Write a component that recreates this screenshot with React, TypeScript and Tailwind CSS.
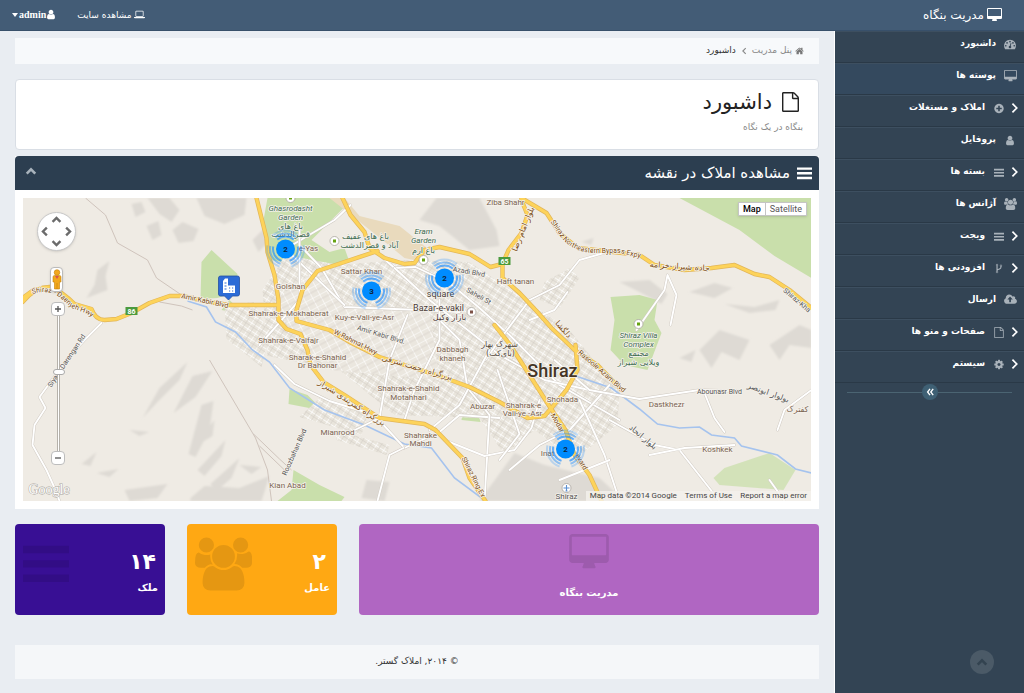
import React from "react";

type IconDef = { box: string; d: string };

const ICONS: Record<string, IconDef> = {
  desktop: {
    box: "64 0 1920 1792",
    d: "M1856 992v-832q0-13-9.5-22.5t-22.5-9.5h-1600q-13 0-22.5 9.5t-9.5 22.5v832q0 13 9.5 22.5t22.5 9.5h1600q13 0 22.5-9.5t9.5-22.5zm128-832v1088q0 66-47 113t-113 47h-544q0 37 16 77.5t32 71 16 43.5q0 26-19 45t-45 19h-512q-26 0-45-19t-19-45q0-14 16-44t32-70 16-78h-544q-66 0-113-47t-47-113v-1088q0-66 47-113t113-47h1600q66 0 113 47t47 113z",
  },
  user: {
    box: "256 0 1280 1792",
    d: "M1536 1399q0 109-62.5 187t-150.5 78h-854q-88 0-150.5-78t-62.5-187q0-85 8.5-160.5t31.5-152 58.5-131 94-89 134.5-34.5q131 128 313 128t313-128q76 0 134.5 34.5t94 89 58.5 131 31.5 152 8.5 160.5zm-256-887q0 159-112.5 271.5t-271.5 112.5-271.5-112.5-112.5-271.5 112.5-271.5 271.5-112.5 271.5 112.5 112.5 271.5z",
  },
  users: {
    box: "64 0 1920 1792",
    d: "M657 896q-162 5-265 128h-134q-82 0-138-40.5t-56-118.5q0-353 124-353 6 0 43.5 21t97.5 42.5 119 21.5q67 0 133-23-5 37-5 66 0 159 93 293zm1071 637q0 120-73 189.5t-194 69.5h-874q-121 0-194-69.5t-73-189.5q0-53 3.5-103.5t14-109 26.5-108.5 43-97.5 62-81 85.5-53.5 111.5-20q10 0 43 21.5t73 48 107 48 135 21.5 135-21.5 107-48 73-48 43-21.5q61 0 111.5 20t85.5 53.5 62 81 43 97.5 26.5 108.5 14 109 3.5 103.5zm-1024-1277q0 106-75 181t-181 75-181-75-75-181 75-181 181-75 181 75 75 181zm704 384q0 159-112.5 271.5t-271.5 112.5-271.5-112.5-112.5-271.5 112.5-271.5 271.5-112.5 271.5 112.5 112.5 271.5zm576 225q0 78-56 118.5t-138 40.5h-134q-103-123-265-128 93-134 93-293 0-29-5-66 66 23 133 23 59 0 119-21.5t97.5-42.5 43.5-21q124 0 124 353zm-128-609q0 106-75 181t-181 75-181-75-75-181 75-181 181-75 181 75 75 181z",
  },
  home: {
    box: "64 128 1664 1536",
    d: "M1472 992v480q0 26-19 45t-45 19h-384v-384h-256v384h-384q-26 0-45-19t-19-45v-480q0-1 .5-3t.5-3l575-474 575 474q1 2 1 6zm223-69l-62 74q-8 9-21 11h-3q-13 0-21-7l-692-577-692 577q-12 8-24 7-13-2-21-11l-62-74q-8-10-7-23.5t11-21.5l719-599q32-26 76-26t76 26l244 204v-195q0-14 9-23t23-9h192q14 0 23 9t9 23v408l219 182q10 8 11 21.5t-7 23.5z",
  },
  plus: {
    box: "128 0 1536 1792",
    d: "M1344 960v-128q0-26-19-45t-45-19h-256v-256q0-26-19-45t-45-19h-128q-26 0-45 19t-19 45v256h-256q-26 0-45 19t-19 45v128q0 26 19 45t45 19h256v256q0 26 19 45t45 19h128q26 0 45-19t19-45v-256h256q26 0 45-19t19-45zm320-64q0 209-103 385.5t-279.5 279.5-385.5 103-385.5-103-279.5-279.5-103-385.5 103-385.5 279.5-279.5 385.5-103 385.5 103 279.5 279.5 103 385.5z",
  },
  cog: {
    box: "128 0 1536 1792",
    d: "M1152 896q0-106-75-181t-181-75-181 75-75 181 75 181 181 75 181-75 75-181zm512-109v222q0 12-8 23t-20 13l-185 28q-19 54-39 91 35 50 107 138 10 12 10 25t-9 23q-27 37-99 108t-94 71q-12 0-26-9l-138-108q-44 23-91 38-16 136-29 186-7 28-36 28h-222q-14 0-24.5-8.5t-11.5-21.5l-28-184q-49-16-90-37l-141 107q-10 9-25 9-14 0-25-11-126-114-165-168-7-10-7-23 0-12 8-23 15-21 51-66.5t54-70.5q-27-50-41-99l-183-27q-13-2-21-12.5t-8-23.5v-222q0-12 8-23t19-13l186-28q14-46 39-92-40-57-107-138-10-12-10-24 0-10 9-23 26-36 98.5-107.5t94.5-71.5q13 0 26 10l138 107q44-23 91-38 16-136 29-186 7-28 36-28h222q14 0 24.5 8.5t11.5 21.5l28 184q49 16 90 37l142-107q9-9 24-9 13 0 25 10 129 119 165 170 7 8 7 22 0 12-8 23-15 21-51 66.5t-54 70.5q26 50 41 98l183 28q13 2 21 12.5t8 23.5z",
  },
  cloud: {
    box: "0 64 1920 1792",
    d: "M1280 864q0-14-9-23l-352-352q-9-9-23-9t-23 9l-351 351q-10 12-10 24 0 14 9 23t23 9h224v352q0 13 9.5 22.5t22.5 9.5h192q13 0 22.5-9.5t9.5-22.5v-352h224q13 0 22.5-9.5t9.5-22.5zm640 288q0 159-112.5 271.5t-271.5 112.5h-1088q-185 0-316.5-131.5t-131.5-316.5q0-130 70-240t188-165q-2-30-2-43 0-212 150-362t362-150q156 0 285.5 87t188.5 231q71-62 166-62 106 0 181 75t75 181q0 76-41 138 130 31 213.5 135.5t83.5 238.5z",
  },
  file: {
    box: "128 0 1536 1792",
    d: "M1596 380q28 28 48 76t20 88v1152q0 40-28 68t-68 28h-1344q-40 0-68-28t-28-68v-1600q0-40 28-68t68-28h896q40 0 88 20t76 48zm-444-244v376h376q-10-29-22-41l-313-313q-12-12-41-22zm384 1528v-1024h-416q-40 0-68-28t-28-68v-416h-768v1536h1280z",
  },
  laptop: {
    box: "64 128 1920 1536",
    d: "M480 1280q-66 0-113-47t-47-113v-704q0-66 47-113t113-47h1088q66 0 113 47t47 113v704q0 66-47 113t-113 47h-1088zm-32-864v704q0 13 9.5 22.5t22.5 9.5h1088q13 0 22.5-9.5t9.5-22.5v-704q0-13-9.5-22.5t-22.5-9.5h-1088q-13 0-22.5 9.5t-9.5 22.5zm1376 928h160v96q0 40-47 68t-113 28h-1600q-66 0-113-28t-47-68v-96h1760zm-720 96q16 0 16-16t-16-16h-160q-16 0-16 16t16 16h160z",
  },
  fork: {
    box: "256 0 1280 1792",
    d: "M672 1472q0-40-28-68t-68-28-68 28-28 68 28 68 68 28 68-28 28-68zm0-1152q0-40-28-68t-68-28-68 28-28 68 28 68 68 28 68-28 28-68zm640 128q0-40-28-68t-68-28-68 28-28 68 28 68 68 28 68-28 28-68zm96 0q0 52-26 96.5t-70 69.5q-2 287-226 414-67 38-203 81-128 40-169.5 71t-41.5 100v26q44 25 70 69.5t26 96.5q0 80-56 136t-136 56-136-56-56-136q0-52 26-96.5t70-69.5v-820q-44-25-70-69.5t-26-96.5q0-80 56-136t136-56 136 56 56 136q0 52-26 96.5t-70 69.5v497q54-26 154-57 55-17 87.5-29.5t70.5-31 59-39.5 40.5-51 28-69.5 8.5-91.5q-44-25-70-69.5t-26-96.5q0-80 56-136t136-56 136 56 56 136z",
  },
  gauge: {
    box: "0 128 1792 1664",
    d: "M384 1152q0-53-37.5-90.5t-90.5-37.5-90.5 37.5-37.5 90.5 37.5 90.5 90.5 37.5 90.5-37.5 37.5-90.5zm192-448q0-53-37.5-90.5t-90.5-37.5-90.5 37.5-37.5 90.5 37.5 90.5 90.5 37.5 90.5-37.5 37.5-90.5zm428 481l101-382q6-26-7.5-48.5t-38.5-29.5-48 6.5-30 39.5l-101 382q-60 5-107 43.5t-63 98.5q-20 77 20 146t117 89 146-20 89-117q16-60-6-117t-72-91zm660-33q0-53-37.5-90.5t-90.5-37.5-90.5 37.5-37.5 90.5 37.5 90.5 90.5 37.5 90.5-37.5 37.5-90.5zm-640-640q0-53-37.5-90.5t-90.5-37.5-90.5 37.5-37.5 90.5 37.5 90.5 90.5 37.5 90.5-37.5 37.5-90.5zm448 192q0-53-37.5-90.5t-90.5-37.5-90.5 37.5-37.5 90.5 37.5 90.5 90.5 37.5 90.5-37.5 37.5-90.5zm320 448q0 261-141 483-19 29-54 29h-1402q-35 0-54-29-141-221-141-483 0-182 71-348t191-286 286-191 348-71 348 71 286 191 191 286 71 348z",
  },
  bars: {
    box: "0 0 16 14",
    d: "M0 1h16v2.6H0zM0 6h16v2.6H0zM0 11h16v2.6H0z",
  },
};

function Icon({ name, className }: { name: string; className: string }) {
  const icon = ICONS[name];
  return (
    <svg viewBox={icon.box} className={className} fill="currentColor" aria-hidden="true">
      <path d={icon.d} />
    </svg>
  );
}

function Chevron({ d, className, width = 3 }: { d: string; className: string; width?: number }) {
  return (
    <svg viewBox="0 0 14 14" className={className} fill="none" stroke="currentColor" strokeWidth={width} aria-hidden="true">
      <path d={d} />
    </svg>
  );
}

const UP = "M2 10l5-5 5 5";
const DOWN = "M2 4l5 5 5-5";
const RIGHT = "M4 2l5 5-5 5";
const LEFT = "M10 2L5 7l5 5";

const MENU = [
  { label: "داشبورد", icon: "gauge" },
  { label: "پوسته ها", icon: "desktop", active: true },
  { label: "املاک و مستغلات", icon: "plus", sub: true },
  { label: "پروفایل", icon: "user" },
  { label: "بسته ها", icon: "bars", sub: true },
  { label: "آژانس ها", icon: "users" },
  { label: "ویجت", icon: "bars", sub: true },
  { label: "افزودنی ها", icon: "fork", sub: true },
  { label: "ارسال", icon: "cloud" },
  { label: "صفحات و منو ها", icon: "file", sub: true },
  { label: "سیستم", icon: "cog", sub: true },
];

function menuIconSize(name: string) {
  if (name === "bars") return "h-[9px] w-[10px] shrink-0";
  if (name === "desktop" || name === "users" || name === "cloud") return "h-3 w-[13px] shrink-0";
  return "h-[11px] w-3 shrink-0";
}

function Sidebar() {
  return (
    <aside className="relative w-[189px] shrink-0 bg-[#334454]">
      <nav>
        <ul>
          {MENU.map((m) => (
            <li key={m.label}>
              <a
                href="#"
                className={
                  "flex h-8 items-center gap-2 border-b border-t border-b-[#2a3947] border-t-[#3d4f60] pb-[6px] pr-2 text-[9px] font-bold text-white " +
                  (m.active ? "bg-[#34495e]" : "")
                }
              >
                {m.sub && <Chevron d={RIGHT} width={2} className="-ml-1 -mr-[5px] size-3 shrink-0" />}
                <span className={"flex justify-center text-[#a9b2ba] " + (m.sub ? "w-3" : "w-3")}>
                  <Icon name={m.icon} className={menuIconSize(m.icon)} />
                </span>
                <span>{m.label}</span>
              </a>
            </li>
          ))}
        </ul>
      </nav>
      <div className="flex items-center px-3 py-px">
        <span className="h-px flex-1 bg-[#4b6472]" />
        <button aria-label="جمع کردن منو" className="flex size-4 items-center justify-center rounded-full bg-[#3f6074] text-white">
          <svg viewBox="0 0 10 10" className="size-2" fill="none" stroke="currentColor" strokeWidth="1.7">
            <path d="M5 1L2 5l3 4M9 1L6 5l3 4" />
          </svg>
        </button>
        <span className="h-px flex-1 bg-[#4b6472]" />
      </div>
      <button aria-label="بالا" className="absolute bottom-[19px] right-[30px] flex size-6 items-center justify-center rounded-full bg-[#4b5a67] text-[#334350]">
        <Chevron d={UP} className="size-3" />
      </button>
    </aside>
  );
}

const YELLOW = [
  "M23 302 Q36 286 52 287 Q64 293 75 304 L92 309 Q96 320 105 320 L117 319 L132 313 L150 303 L170 296 L183 296 L205 301 L229 305 L278 305",
  "M23 298 L34 290 L50 288",
  "M257 198 L262 218 L267 238 L268 252 L275 275 L279 300 L279 320 L287 329 L301 334 L308 350 L311 365 L324 382 L345 395 L380 418 L425 424 L436 430 L463 458 L470 478 L486 501",
  "M343 198 L351 215 L365 232 L370 248 L385 258 L405 264 L415 263 L425 250 L440 247 L470 254 L491 267 L503 264 L509 250 L522 233 L528 215 L522 200",
  "M503 264 L503 278 L520 293 L537 311 L552 328 L575 350 L598 365 L622 390",
  "M522 198 L547 213 L560 233 L578 248 L605 251 L640 255 L655 265 L685 270 L712 268 L735 265 L755 274 L770 277 L790 290 L812 308",
  "M378 251 L345 262 L318 271 L303 290 L297 310 L297 321 L330 330 L352 343 L380 357 L440 376 L470 387 L500 402 L528 418 L545 416 L552 408 L567 390 L578 370 L576 345",
  "M495 325 L510 344 L530 375 L551 408 L566 430 L575 455 L590 475 L602 501",
];
const WHITE = [
  "M102 323 L84 341 L67 360 L40 397 L46 408 L35 425 L33 445 L47 470 L56 490 L60 501",
  "M300 245 L322 268 L345 307 L420 310 L460 312", "M345 305 L286 249 L335 220 L351 205",
  "M372 248 L395 268 L416 267 L450 283 L480 308 L510 335 L560 385 L620 420",
  "M395 268 L430 300 L500 355 L545 380 L612 395", "M275 365 L295 384 L330 401 L375 415 L405 448 L440 432 L460 415 L500 418",
  "M378 501 L390 455 L404 448", "M345 435 L380 418 L390 360 L408 315",
  "M405 420 L415 390 L440 340 L440 300", "M485 501 L490 415 L468 388 L460 340 L440 320",
  "M445 440 L485 456 L515 450 L532 428 L540 400", "M500 460 L520 434 L498 370",
  "M486 360 L500 340 L530 300 L560 285 L580 260 L608 252", "M530 320 L555 310 L568 292",
  "M610 385 L570 430 L540 445 L510 470", "M555 360 L590 390 L640 399 L700 390 L740 391",
  "M705 393 L715 418 L725 432", "M610 420 L655 445 L680 450 L720 501", "M580 400 L605 455 L620 501",
  "M650 455 L685 448 L735 445", "M637 330 L665 290 L668 275 L677 295 L671 325",
  "M430 430 L460 405 L490 350", "M560 480 L610 460", "M300 230 L300 300 L260 345", "M785 501 L770 480",
  "M812 390 L785 410 L778 430",
];
const STREETS = "M286 255 L263 290 L268 356 L340 370 L395 415 L480 418 L505 455 L535 430 L575 460 L618 425 L620 392 L570 330 L520 296 L470 262 L400 260 L340 265 Z";

type Label = { x: number; y: number; t: string; r?: number; c?: string; s?: number; i?: boolean; fa?: boolean; w?: number };
const BROWN = "#7a6250";
const ROAD = "#7b4b10";
const GREEN = "#3c6b50";
const LABELS: Label[] = [
  { x: 291, y: 211, t: "Ghasrodasht", c: GREEN, i: true }, { x: 291, y: 220, t: "Garden", c: GREEN, i: true },
  { x: 291, y: 229, t: "باغ های", c: GREEN, fa: true }, { x: 291, y: 237, t: "قصرالدشت", c: GREEN, fa: true },
  { x: 309, y: 251, t: "e-Yas", c: BROWN }, { x: 366, y: 239, t: "باغ های عفیف", c: GREEN, fa: true },
  { x: 370, y: 248, t: "آباد و قصرالدشت", c: GREEN, fa: true },
  { x: 424, y: 234, t: "Eram", c: GREEN, i: true }, { x: 424, y: 243, t: "Garden", c: GREEN, i: true },
  { x: 424, y: 253, t: "باغ ارم", c: GREEN, fa: true },
  { x: 506, y: 205, t: "Ziba Shahr", c: BROWN }, { x: 362, y: 274, t: "Sattar Khan", c: BROWN },
  { x: 291, y: 289, t: "Golshan", c: BROWN }, { x: 289, y: 316, t: "Shahrak-e-Mokhaberat", c: BROWN },
  { x: 365, y: 320, t: "Kuy-e-Vali-ye-Asr", c: BROWN }, { x: 289, y: 343, t: "Shahrak-e-Valfajr", c: BROWN },
  { x: 441, y: 297, t: "square", c: "#4c4036", s: 9 }, { x: 439, y: 311, t: "Bazar-e-vakil", c: "#4b3b38", s: 9 },
  { x: 450, y: 320, t: "بازار وکیل", c: "#4b3b38", fa: true }, { x: 516, y: 284, t: "Haft tanan", c: BROWN },
  { x: 318, y: 360, t: "Sharak-e-Shahid", c: BROWN }, { x: 318, y: 368, t: "Dr Bahonar", c: BROWN },
  { x: 453, y: 352, t: "Dabbagh", c: BROWN }, { x: 453, y: 361, t: "khaneh", c: BROWN },
  { x: 500, y: 347, t: "شهرک بهار", c: "#544a42", fa: true }, { x: 501, y: 356, t: "(بای‌کت)", c: "#544a42", fa: true },
  { x: 409, y: 391, t: "Shahrak-e-Shahid", c: BROWN }, { x: 409, y: 400, t: "Motahhari", c: BROWN },
  { x: 483, y: 409, t: "Abuzar", c: BROWN }, { x: 524, y: 408, t: "Shahrak-e", c: BROWN }, { x: 523, y: 416, t: "Vali-ye -Asr", c: BROWN },
  { x: 338, y: 435, t: "Mianrood", c: BROWN }, { x: 421, y: 438, t: "Shahrake", c: BROWN }, { x: 421, y: 446, t: "Mahdi", c: BROWN },
  { x: 288, y: 488, t: "Kian Abad", c: BROWN }, { x: 563, y: 402, t: "Shohada", c: BROWN },
  { x: 553, y: 377, t: "Shiraz", c: "#443526", s: 18, w: 500 },
  { x: 639, y: 338, t: "Shiraz Villa", c: GREEN, i: true }, { x: 639, y: 347, t: "Complex", c: GREEN, i: true },
  { x: 639, y: 356, t: "مجتمع", c: GREEN, fa: true }, { x: 639, y: 365, t: "ویلایی شیراز", c: GREEN, fa: true },
  { x: 667, y: 407, t: "Dastkhezr", c: BROWN }, { x: 718, y: 452, t: "Koshkek", c: BROWN },
  { x: 798, y: 412, t: "کفترک", c: BROWN, fa: true }, { x: 567, y: 499, t: "Shiraz", c: "#555555" },
  { x: 548, y: 456, t: "Inat", c: BROWN }, { x: 720, y: 394, t: "Abounasr Blvd", c: "#555555", s: 7 },
  { x: 469, y: 274, t: "Azadi Blvd", r: 10, c: "#555555", s: 7 }, { x: 478, y: 298, t: "Saheli St", r: 30, c: "#555555", s: 7 },
  { x: 381, y: 337, t: "Amir Kabir Blvd.", r: 17, c: "#555555", s: 7 },
  { x: 205, y: 303, t: "Amir Kabir Blvd", r: 12, c: ROAD, s: 7 },
  { x: 355, y: 344, t: "W Rahmat Hwy", r: 27, c: ROAD, s: 7 },
  { x: 417, y: 370, t: "بزرگراه رحمت شرقی", r: 16, c: ROAD, fa: true },
  { x: 351, y: 405, t: "بزرگراه کمربندی شیراز", r: 33, c: ROAD, fa: true },
  { x: 472, y: 478, t: "Shiraz Ring Ex", r: 63, c: ROAD, s: 7 }, { x: 601, y: 373, t: "Rasoole Azam Blvd", r: 41, c: ROAD, s: 7 },
  { x: 562, y: 331, t: "دلگشا", r: 48, c: ROAD, fa: true }, { x: 526, y: 230, t: "بلوار امام رضا", r: -68, c: ROAD, fa: true },
  { x: 680, y: 269, t: "جاده شیراز-خرامه", r: 4, c: ROAD, fa: true }, { x: 796, y: 302, t: "Shiraz-Kha", r: 40, c: "#555555", s: 7 },
  { x: 556, y: 424, t: "Modar", r: 60, c: ROAD, s: 7 }, { x: 580, y: 463, t: "evard", r: 60, c: ROAD, s: 7 },
  { x: 642, y: 439, t: "بلوار اتحاد", r: 40, c: "#555555", fa: true }, { x: 768, y: 395, t: "بولوار ابونصر", r: 20, c: "#555555", fa: true },
  { x: 297, y: 453, t: "Roozbahan Blvd", r: -66, c: "#555555", s: 7 }, { x: 69, y: 362, t: "Siyakh Darengan Rd", r: -56, c: "#555555", s: 7 },
];

const CLUSTERS = [
  { x: 286, y: 249, n: 2 },
  { x: 372, y: 291, n: 3 },
  { x: 445, y: 278, n: 2 },
  { x: 566, y: 449, n: 2 },
];

function arcs(r: number) {
  const pt = (a: number) => `${(r * Math.cos(a)).toFixed(2)} ${(r * Math.sin(a)).toFixed(2)}`;
  return [-90, 30, 150]
    .map((deg) => {
      const m = (deg * Math.PI) / 180;
      return `M${pt(m - 0.72)} A${r} ${r} 0 0 1 ${pt(m + 0.72)}`;
    })
    .join(" ");
}

function MapDrawing() {
  return (
    <svg viewBox="23 198 789 303" preserveAspectRatio="xMidYMid slice" className="block h-[303px] w-full bg-[#efebe4]" role="img" aria-label="Shiraz">
      <defs>
        <pattern id="blocks" width="9" height="7" patternUnits="userSpaceOnUse" patternTransform="rotate(33)">
          <rect width="9" height="7" fill="#e9e5dc" />
          <path d="M0 0H9M0 0V7" stroke="#ffffff" strokeWidth="1.3" />
          <path d="M0 3.5H9M4.5 0V7" stroke="#d5d0c8" strokeWidth="0.6" />
        </pattern>
        <pattern id="blocks2" width="8" height="10" patternUnits="userSpaceOnUse" patternTransform="rotate(-28)">
          <rect width="8" height="10" fill="#ebe7df" />
          <path d="M0 0H8M0 0V10" stroke="#ffffff" strokeWidth="1.2" />
          <path d="M0 5H8" stroke="#d8d3cb" strokeWidth="0.7" />
        </pattern>
        <filter id="soft"><feGaussianBlur stdDeviation="1.2" /></filter>
        <path id="bypass" d="M551 222 L563 239 Q574 252 595 253 L620 253 L650 260 L665 268" />
        <path id="daenyeh" d="M33 294 Q48 289 60 297 L72 308 L86 313 L100 322" />
      </defs>
      <g fill="#dedad4" filter="url(#soft)">
        <path d="M197 198 L247 198 L245 215 L225 224 L205 216 Z" />
        <path d="M148 198 L170 198 L180 210 L172 222 L160 214 Z M132 204 l10 -2 l4 10 l-10 5 Z M147 226 l12 -5 l3 14 l-9 5 Z M173 230 l10 -8 l16 7 l-5 12 l-15 2 Z" />
        <path d="M98 270 L110 261 L106 276 L108 290 L87 298 L95 285 Z M253 240 l12 -12 l2 16 l-8 8 Z" />
        <path d="M143 418 L160 388 L188 362 L180 380 L158 402 Z M174 413 L193 376 L213 371 L196 397 Z M189 454 L202 405 L214 401 L210 430 L196 457 Z M203 435 l12 -15 l-2 16 l-10 6 Z M198 470 L226 440 L222 456 L205 476 Z M211 484 L240 458 L232 478 L217 491 Z" />
        <path d="M82 464 l15 -12 l-6 14 Z M97 473 l22 -4 l-9 8 Z M125 490 L168 484 L158 498 L130 501 Z M191 498 L205 486 L240 488 L270 476 L262 501 L191 501 Z M130 430 l20 2 l-10 4 Z M240 465 l22 2 l-10 7 Z" />
        <path d="M437 198 L480 198 L497 230 L500 246 L470 250 L440 226 L420 220 Z" />
        <path d="M620 282 L650 280 L668 294 L662 304 L640 292 Z M690 292 l25 -9 l18 5 l-18 10 Z M725 304 L755 307 L780 300 L776 310 L750 313 Z M582 242 l12 -4 l-2 7 Z" />
        <path d="M700 350 L720 330 L750 340 L740 360 L722 352 L712 368 Z M770 345 L800 325 L812 330 L812 348 L790 345 L780 360 Z M680 358 l16 -8 l-4 12 Z" />
        <path d="M480 501 L515 453 L545 465 L600 478 L625 501 Z M367 480 L390 482 L385 501 L362 498 Z" />
      </g>
      <g fill="#c9dfab">
        <path d="M201 299 L202 262 L212 250 L238 274 L236 292 L218 298 Z M222 310 l8 -10 l6 6 l-3 6 Z" />
        <path d="M268 198 L340 198 L346 206 L312 240 L330 252 L345 248 L350 262 L335 264 L300 266 L272 260 L264 220 Z" />
        <path d="M680 198 L812 198 L812 278 L775 256 L740 230 Z" />
        <path d="M611 297 L640 295 L658 300 L655 320 L662 333 L648 370 L625 365 L611 350 L615 320 Z" />
        <path d="M465 385 L472 388 L481 422 L462 420 L465 400 Z" />
        <path d="M290 389 L308 395 L320 407 L355 418 L350 424 L320 410 L289 404 Z" />
        <path d="M294 470 L320 485 L345 497 L342 501 L278 501 L292 490 Z" />
        <path d="M714 478 L725 468 L770 453 L796 470 L784 490 L720 485 Z" opacity="0.75" />
      </g>
      <path d="M330 198 L345 198 L360 216 L400 226 L430 250 L424 262 L405 258 L378 236 Z" fill="#e9dabd" />
      <path d={STREETS} fill="url(#blocks)" />
      <path d="M276 300 L318 268 L350 306 L430 312 L440 380 L330 370 L290 330 Z" fill="url(#blocks2)" />
      <path d="M225 305 l30 -3 l15 35 l-8 30 l-35 -28 Z M545 282 l25 -14 l10 10 l-20 30 l-20 -8 Z M320 398 l50 12 l-8 25 l-62 -18 Z M335 430 l55 15 l-3 10 l-50 -15 Z" fill="url(#blocks)" />
      <g fill="none" stroke="#cfc4bc" strokeWidth="1">
        <path d="M86 198 L106 215 L118 243 L148 260 L157 278 L182 295" />
        <path d="M160 302 L182 306 L193 310 M210 360 L256 438 L268 470 L272 501" />
        <path d="M254 434 L280 459 L292 470 M260 446 L285 470" />
      </g>
      <g fill="none" stroke="#a5c3ee" strokeWidth="1.6">
        <path d="M188 301 L207 307 L216 322 L236 332 L253 350 L270 362 L290 388 L325 410 L365 425 L405 444 L432 448 L455 478 L486 501" />
        <path d="M570 374 L612 388 L640 409 L658 424 L680 428 L700 427 L712 435 L735 438 L742 446 L778 455 L796 469 L812 473" />
      </g>
      <g fill="none" strokeLinejoin="round" strokeLinecap="round">
        {WHITE.map((d, i) => (
          <g key={i}>
            <path d={d} stroke="#cfc9c1" strokeWidth="2.8" />
            <path d={d} stroke="#ffffff" strokeWidth="1.9" />
          </g>
        ))}
        {YELLOW.map((d, i) => (
          <path key={i} d={d} stroke="#e2b659" strokeWidth="4.4" />
        ))}
        {YELLOW.map((d, i) => (
          <path key={i} d={d} stroke="#fdd35a" strokeWidth="3" />
        ))}
      </g>
      <g>
        {[[132, 311, "86"], [505, 261, "65"]].map(([x, y, t]) => (
          <g key={t}>
            <rect x={Number(x) - 6} y={Number(y) - 4} width="12" height="8" fill="#4b9a3d" />
            <text x={x} y={Number(y) + 3} fontSize="7" fontWeight="700" textAnchor="middle" fill="#ffffff">{t}</text>
          </g>
        ))}
        {[[335, 241], [424, 260], [639, 324], [291, 198], [472, 312]].map(([x, y], i) => (
          <g key={i}>
            <circle cx={x} cy={y} r="4.5" fill="#ffffff" stroke="#a9a59d" strokeWidth="0.8" />
            <rect x={x - 1.5} y={y - 1.5} width="3" height="3" fill={i === 4 ? "#7d5147" : "#66a312"} />
          </g>
        ))}
        <circle cx="567" cy="488" r="4.5" fill="#ffffff" stroke="#a9a59d" strokeWidth="0.8" />
        <path d="M567 485v6M564 488h6M566 491h2" stroke="#5c8fd0" strokeWidth="1.1" />
      </g>
      <g textAnchor="middle" stroke="#f5f2ec" strokeWidth="1.6" paintOrder="stroke" strokeLinejoin="round">
        {LABELS.map((l, i) => (
          <text
            key={i}
            x={l.x}
            y={l.y}
            transform={l.r ? `rotate(${l.r} ${l.x} ${l.y})` : undefined}
            fontSize={l.s ?? 8}
            fontWeight={l.w ?? 400}
            fontStyle={l.i ? "italic" : "normal"}
            fill={l.c}
            direction={l.fa ? "rtl" : "ltr"}
            className={l.fa ? "font-['DejaVu_Sans',sans-serif]" : "font-[Roboto,sans-serif]"}
          >
            {l.t}
          </text>
        ))}
        <g fontSize="7" fill={ROAD} textAnchor="start" direction="ltr" className="font-[Roboto,sans-serif]">
          <text><textPath href="#bypass">Shiraz Northeastern Bypass Expy</textPath></text>
          <text><textPath href="#daenyeh">Shiraz - Daenyeh Hwy</textPath></text>
        </g>
      </g>
      {CLUSTERS.map((c) => (
        <g key={c.x} transform={`translate(${c.x} ${c.y})`}>
          <g fill="none" stroke="#1a8cff" strokeWidth="2">
            <path d={arcs(12.5)} opacity="0.65" />
            <path d={arcs(15.5)} opacity="0.45" />
            <path d={arcs(18.5)} opacity="0.25" />
          </g>
          <circle r="9.5" fill="#008cff" />
          <text y="3" textAnchor="middle" fontSize="8" fontWeight="700" fill="#10243a" className="font-[Roboto,sans-serif]">{c.n}</text>
        </g>
      ))}
      <g>
        <path d="M221 276h17q2 0 2 2v16q0 2-2 2h-5l-4 4-4-4h-4q-2 0-2-2v-16q0-2 2-2z" fill="#2c6bd6" stroke="#2350a3" strokeWidth="0.8" />
        <path d="M223.500 293v-12l2-2.500 3 0v7h7v7.500z" fill="#ffffff" />
        <path d="M225 283h2M225 286h2M225 289h2M229.500 288h1.200M232.500 288h1.200M229.500 291h1.200M232.500 291h1.200" stroke="#2c6bd6" strokeWidth="1.1" />
      </g>
      <text x="29" y="494" fontSize="14" fill="#ffffff" stroke="#aaa69f" strokeWidth="1" paintOrder="stroke" textAnchor="start" direction="ltr" className="font-['Liberation_Serif',serif]">Google</text>
    </svg>
  );
}

function MapView() {
  return (
    <div dir="ltr" className="relative overflow-hidden font-[Roboto,sans-serif]">
      <MapDrawing />
      <div className="absolute left-[14px] top-[14px] grid size-[39px] grid-cols-3 grid-rows-3 place-items-center rounded-full border border-[#c9c9c9] bg-white text-[#6b6b6b] shadow">
        <button aria-label="Pan up" className="col-start-2 row-start-1"><Chevron d={UP} className="size-[11px]" /></button>
        <button aria-label="Pan left" className="col-start-1 row-start-2"><Chevron d={LEFT} className="size-[11px]" /></button>
        <button aria-label="Pan right" className="col-start-3 row-start-2"><Chevron d={RIGHT} className="size-[11px]" /></button>
        <button aria-label="Pan down" className="col-start-2 row-start-3"><Chevron d={DOWN} className="size-[11px]" /></button>
      </div>
      <button aria-label="Street View" className="absolute left-[27px] top-[69px] flex h-[25px] w-[13px] items-center justify-center rounded-sm border border-[#bbbbbb] bg-white shadow">
        <svg viewBox="0 0 10 21" className="h-[21px] w-[10px]">
          <circle cx="5" cy="3.500" r="2.800" fill="#f2a81d" stroke="#c47f0a" strokeWidth="0.600" />
          <path d="M1 8q0-1.500 1.500-1.500h5Q9 6.500 9 8v5H7.500v7h-5v-7H1z" fill="#f2a81d" stroke="#c47f0a" strokeWidth="0.600" />
          <path d="M3 7l2 3 2-3z" fill="#d9534f" />
          <path d="M5 14v6" stroke="#c47f0a" strokeWidth="0.600" />
        </svg>
      </button>
      <div className="absolute left-[28px] top-[104px] flex h-[163px] w-[14px] flex-col items-center">
        <button aria-label="Zoom in" className="flex size-[14px] items-center justify-center rounded-sm border border-[#bdbdbd] bg-white text-[#555555]">
          <svg viewBox="0 0 8 8" className="size-2" stroke="currentColor" strokeWidth="1.300"><path d="M1 4h6M4 1v6" /></svg>
        </button>
        <span className="relative w-[3px] flex-1 border-x border-[#b5b1aa] bg-white">
          <span className="absolute -left-[5px] top-[53px] h-[6px] w-[12px] rounded-sm border border-[#aaaaaa] bg-white" />
        </span>
        <button aria-label="Zoom out" className="flex size-[14px] items-center justify-center rounded-sm border border-[#bdbdbd] bg-white text-[#555555]">
          <svg viewBox="0 0 8 8" className="size-2" stroke="currentColor" strokeWidth="1.300"><path d="M1 4h6" /></svg>
        </button>
      </div>
      <div className="absolute right-1 top-1 flex h-[14px] border border-[#c5c5c5] bg-white text-[9px] leading-3 shadow-sm">
        <button className="border-r border-[#c5c5c5] px-1 font-medium text-black">Map</button>
        <button className="px-1 text-[#565656]">Satellite</button>
      </div>
      <div className="absolute bottom-0 right-0 flex gap-2 bg-[#f4f1ec]/80 px-1 text-[8px] leading-[10px] text-[#444444]">
        <span>Map data ©2014 Google</span>
        <a href="#">Terms of Use</a>
        <a href="#">Report a map error</a>
      </div>
    </div>
  );
}

export default function App() {
  return (
    <div dir="rtl" className="flex min-h-screen flex-col bg-[#e9edf2] font-['DejaVu_Sans','Noto_Sans',sans-serif] text-[#333333]">
      <header className="flex h-[31px] items-center justify-between border-b border-[#38506a] bg-[#435c76] pb-px pl-3 pr-[22px] text-white">
        <a href="#" className="flex items-center gap-[3px] text-[12px] leading-4">
          <Icon name="desktop" className="h-[14px] w-[15px]" />
          <span className="pt-px">مدریت بنگاه</span>
        </a>
        <div className="flex items-center gap-[22px]">
          <a href="#" className="flex items-center gap-[2px] text-[9px] leading-3">
            <Icon name="laptop" className="h-[9px] w-[11px]" />
            مشاهده سایت
          </a>
          <button className="flex items-center gap-px font-['Liberation_Serif',serif] text-[10px] font-bold leading-3">
            <Icon name="user" className="h-[11px] w-2" />
            admin
            <svg viewBox="0 0 6 4" className="h-1 w-[6px]" fill="currentColor"><path d="M0 0h6L3 4z" /></svg>
          </button>
        </div>
      </header>

      <div className="flex flex-1">
        <Sidebar />
        <main className="flex min-w-0 flex-1 flex-col border-r border-white px-[15px] pb-[14px] pt-[7px]">
          <nav aria-label="مسیر" className="flex h-[26px] items-center gap-[3px] bg-[#f7f9fb] px-[15px] text-[9px] text-[#888888]">
            <Icon name="home" className="h-2 w-[9px] text-[#777777]" />
            <a href="#">پنل مدریت</a>
            <Chevron d={LEFT} className="mx-px size-2" width={2} />
            <span className="text-[#333333]">داشبورد</span>
          </nav>

          <section className="mt-[15px] h-[71px] rounded-sm border border-[#d9dee5] bg-white px-[15px] pt-2">
            <h1 className="flex items-center gap-[10px] pr-1 text-[21px] leading-7 text-[#222222]">
              <Icon name="file" className="h-5 w-[17px]" />
              داشبورد
            </h1>
            <p className="pt-[3px] text-[9px] leading-4 text-[#888888]">بنگاه در یک نگاه</p>
          </section>

          <section className="mt-[6px] bg-white">
            <header className="flex h-[34px] items-center justify-between rounded-t-sm bg-[#2c3e50] pl-[10px] pr-[7px] text-white">
              <h2 className="flex items-center gap-[7px] text-[15px]">
                <Icon name="bars" className="h-[14px] w-[15px]" />
                مشاهده املاک در نقشه
              </h2>
              <button aria-label="بستن پنل" className="pb-1 text-[#a9b3bc]">
                <Chevron d={UP} className="size-3" />
              </button>
            </header>
            <div className="px-2 pb-2 pt-2">
              <MapView />
            </div>
          </section>

          <section className="mt-[15px] grid grid-cols-[460fr_150fr_150fr] gap-[22px] text-white">
            <div className="flex h-[91px] flex-col items-center rounded bg-[#b066c2] pt-[10px]">
              <Icon name="desktop" className="h-[37px] w-10 text-[#9d5bad]" />
              <strong className="pt-3 text-[10px] leading-5">مدریت بنگاه</strong>
            </div>
            <div className="flex h-[91px] items-start justify-between rounded bg-[#ffa813] pl-2 pr-[7px]">
              <div className="pt-6">
                <div className="pr-1 text-[22px] font-bold leading-7">۲</div>
                <div className="text-[10px] font-bold leading-6">عامل</div>
              </div>
              <Icon name="users" className="mt-[13px] h-[54px] w-[57px] text-[#e59712]" />
            </div>
            <div className="flex h-[91px] items-start justify-between rounded bg-[#380f94] pl-2 pr-[7px]">
              <div className="pt-6">
                <div className="pr-[2px] text-[22px] font-bold leading-7">۱۴</div>
                <div className="text-[10px] font-bold leading-6">ملک</div>
              </div>
              <Icon name="bars" className="mt-[18px] h-[42px] w-[46px] text-[#320d85]" />
            </div>
          </section>

          <footer className="mt-[30px] flex h-[34px] items-center justify-center bg-[#f5f7f9] text-[9px]">
            <span>© ۲۰۱۴, املاک گستر.</span>
          </footer>
        </main>
      </div>
    </div>
  );
}
